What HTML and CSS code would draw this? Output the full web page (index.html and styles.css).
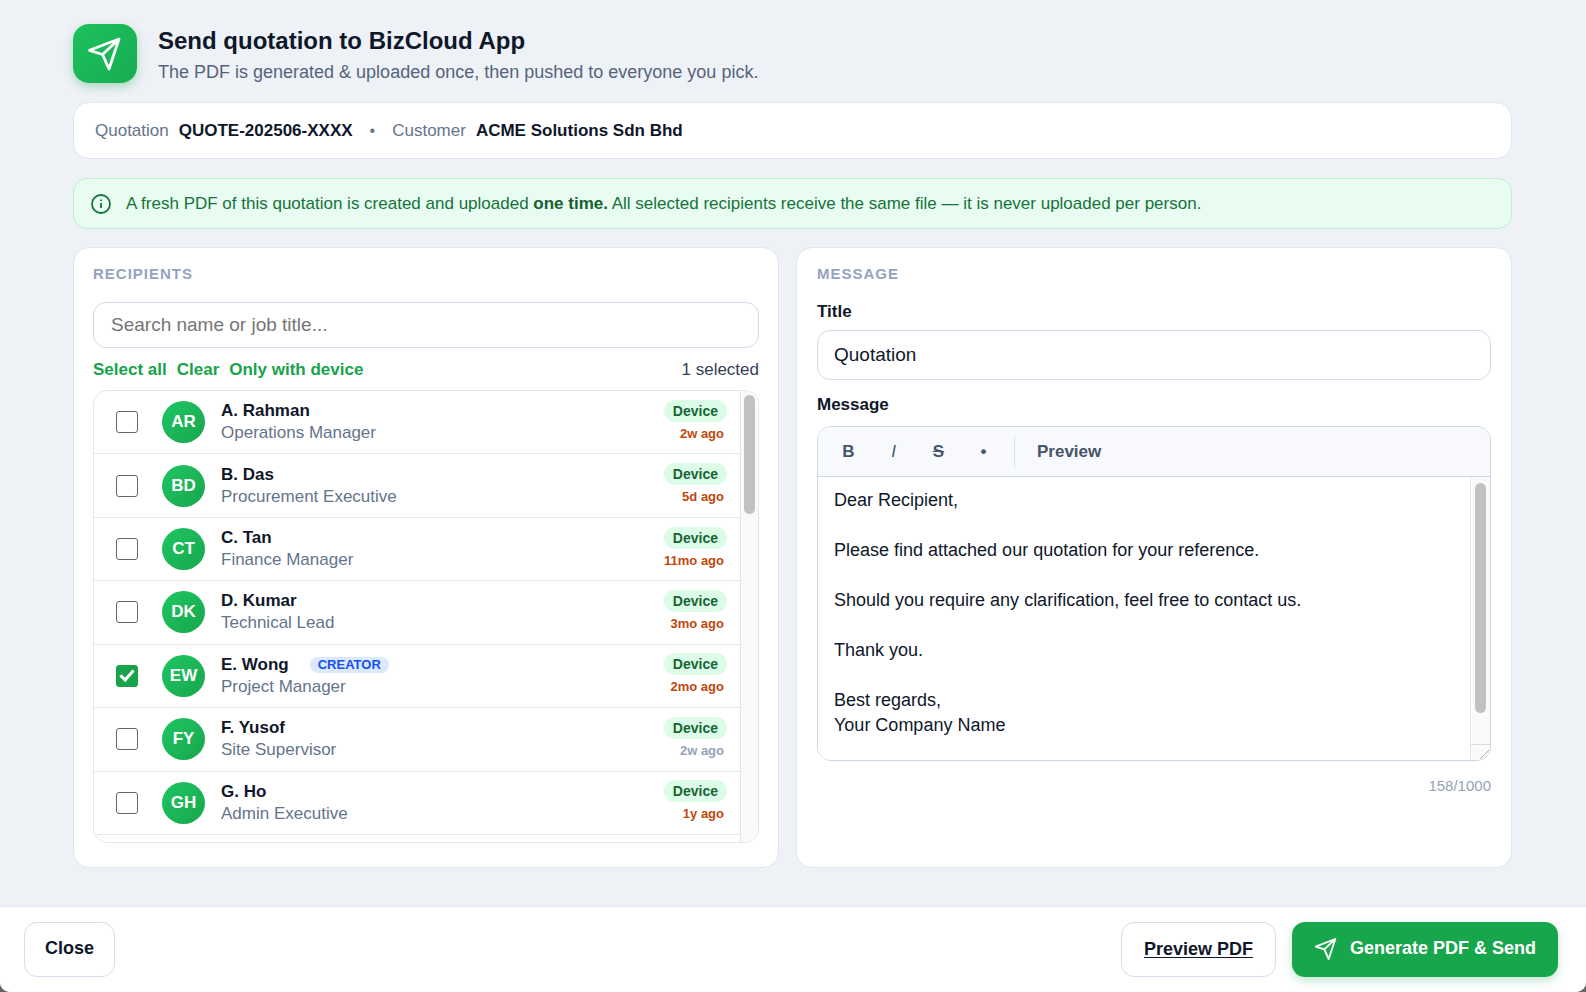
FILE: index.html
```html
<!DOCTYPE html>
<html lang="en">
<head>
    <meta charset="UTF-8">
    <meta name="viewport" content="width=device-width, initial-scale=1.0">
    <title>Send quotation to BizCloud App</title>
    <link rel="stylesheet" href="styles.css">
</head>
<body>

<div class="dialog">
    <main class="content">

        <header class="header">
            <div class="logo">
                <svg class="plane" width="36" height="36" viewBox="0 0 36 36" aria-hidden="true"><path d="M32 3 2.500 14.300 15.500 18.500 22 33ZM32 3 15.500 18.500"/></svg>
            </div>
            <div>
                <h1>Send quotation to BizCloud App</h1>
                <p>The PDF is generated &amp; uploaded once, then pushed to everyone you pick.</p>
            </div>
        </header>

        <div class="meta">
            <span>Quotation</span>
            <strong>QUOTE-202506-XXXX</strong>
            <span class="dot">•</span>
            <span>Customer</span>
            <strong>ACME Solutions Sdn Bhd</strong>
        </div>

        <div class="notice">
            <svg width="20" height="20" viewBox="0 0 20 20" aria-hidden="true"><circle cx="10" cy="10" r="9"/><path d="M10 9v5M10 5.500v1.500"/></svg>
            <p>A fresh PDF of this quotation is created and uploaded <strong>one time.</strong> All selected recipients receive the same file — it is never uploaded per person.</p>
        </div>

        <div class="panels">
            <!-- Recipients -->
            <section class="panel">
                <h2>Recipients</h2>
                <input type="search" class="search" id="search" placeholder="Search name or job title..." aria-label="Search name or job title">
                <div class="actions">
                    <button type="button" id="selectAll">Select all</button>
                    <button type="button" id="clear">Clear</button>
                    <button type="button" id="onlyDevice">Only with device</button>
                    <span id="count">1 selected</span>
                </div>
                <div class="list">
                    <div class="rows">
                        <label class="row">
                            <input type="checkbox">
                            <span class="avatar">AR</span>
                            <span class="who"><b>A. Rahman</b><small>Operations Manager</small></span>
                            <span class="status"><span class="device">Device</span><span class="seen">2w ago</span></span>
                        </label>
                        <label class="row">
                            <input type="checkbox">
                            <span class="avatar">BD</span>
                            <span class="who"><b>B. Das</b><small>Procurement Executive</small></span>
                            <span class="status"><span class="device">Device</span><span class="seen">5d ago</span></span>
                        </label>
                        <label class="row">
                            <input type="checkbox">
                            <span class="avatar">CT</span>
                            <span class="who"><b>C. Tan</b><small>Finance Manager</small></span>
                            <span class="status"><span class="device">Device</span><span class="seen">11mo ago</span></span>
                        </label>
                        <label class="row">
                            <input type="checkbox">
                            <span class="avatar">DK</span>
                            <span class="who"><b>D. Kumar</b><small>Technical Lead</small></span>
                            <span class="status"><span class="device">Device</span><span class="seen">3mo ago</span></span>
                        </label>
                        <label class="row">
                            <input type="checkbox" checked>
                            <span class="avatar">EW</span>
                            <span class="who"><b>E. Wong <span class="creator">CREATOR</span></b><small>Project Manager</small></span>
                            <span class="status"><span class="device">Device</span><span class="seen">2mo ago</span></span>
                        </label>
                        <label class="row">
                            <input type="checkbox">
                            <span class="avatar">FY</span>
                            <span class="who"><b>F. Yusof</b><small>Site Supervisor</small></span>
                            <span class="status"><span class="device">Device</span><span class="seen muted">2w ago</span></span>
                        </label>
                        <label class="row">
                            <input type="checkbox">
                            <span class="avatar">GH</span>
                            <span class="who"><b>G. Ho</b><small>Admin Executive</small></span>
                            <span class="status"><span class="device">Device</span><span class="seen">1y ago</span></span>
                        </label>
                    </div>
                    <div class="track"><div class="thumb"></div></div>
                </div>
            </section>

            <!-- Message -->
            <section class="panel">
                <h2>Message</h2>
                <label class="field-label" for="title">Title</label>
                <input type="text" class="title-input" id="title" value="Quotation">
                <label class="field-label" for="message">Message</label>
                <div class="editor">
                    <div class="toolbar">
                        <button type="button" aria-label="Bold">B</button>
                        <button type="button" class="italic" aria-label="Italic">I</button>
                        <button type="button" class="strike" aria-label="Strikethrough">S</button>
                        <button type="button" aria-label="Bullet list">•</button>
                        <span class="divider"></span>
                        <button type="button" class="preview">Preview</button>
                    </div>
                    <div class="editor-body">
                        <textarea id="message" maxlength="1000">Dear Recipient,

Please find attached our quotation for your reference.

Should you require any clarification, feel free to contact us.

Thank you.

Best regards,
Your Company Name</textarea>
                        <div class="track">
                            <div class="thumb"></div>
                            <svg class="grip" width="19" height="16" viewBox="0 0 19 16" aria-hidden="true"><path d="M9 15 19 5M14 15 19 10"/></svg>
                        </div>
                    </div>
                </div>
                <div class="counter">158/1000</div>
            </section>
        </div>
    </main>

    <footer class="footer">
        <button type="button" class="btn">Close</button>
        <a href="#preview" class="btn preview-pdf">Preview PDF</a>
        <button type="button" class="btn primary">
            <svg class="plane" width="24" height="24" viewBox="0 0 36 36" aria-hidden="true"><path d="M32 3 2.500 14.300 15.500 18.500 22 33ZM32 3 15.500 18.500"/></svg>
            Generate PDF &amp; Send
        </button>
    </footer>
</div>

</body>
</html>
```
FILE: styles.css
```css
*, *::after { box-sizing: border-box; }
body { margin: 0; background: #666; color: #0f172a; font-family: "Liberation Sans", Arial, Helvetica, sans-serif; font-size: 17px; line-height: 22px; }
h1, h2, p { margin: 0; }
button, input, textarea { font-family: inherit; color: inherit; }
button { cursor: pointer; }

.dialog { min-height: 100vh; display: flex; flex-direction: column; background: #eef1f6; border-radius: 0 0 10px 10px; overflow: hidden; }
.content { flex: 1; display: flex; flex-direction: column; padding: 24px 74px 38px 73px; }

/* Header */
.header { display: flex; align-items: flex-start; gap: 21px; height: 59px; margin-bottom: 19px; }
.logo { width: 64px; height: 59px; display: flex; align-items: center; justify-content: center; border-radius: 16px; background: linear-gradient(135deg, #1cc25d, #18ac51); box-shadow: 0 4px 10px rgba(22, 163, 74, 0.3); }
.plane { fill: none; stroke: #fff; stroke-width: 2.8; stroke-linejoin: round; stroke-linecap: round; flex: none; }
.header h1 { font-size: 24px; line-height: 34px; }
.header p { font-size: 18px; line-height: 29px; color: #55647c; }

/* Quotation and customer */
.meta { display: flex; align-items: center; gap: 10px; height: 57px; padding: 0 21px; margin-bottom: 19px; background: #fff; border: 1px solid #e0e6f0; border-radius: 16px; color: #64748b; }
.meta strong { color: #0f172a; }
.meta .dot { margin: 0 7px; font-size: 16px; }

.notice { display: flex; align-items: center; gap: 15px; height: 51px; padding: 0 17px; margin-bottom: 18px; background: #e9fcf1; border: 1px solid #bbf0d0; border-radius: 14px; color: #15733a; }
.notice svg { fill: none; stroke: #15733a; stroke-width: 1.8; flex: none; }
.notice strong { color: #14602f; }

/* Panels */
.panels { flex: 1; display: grid; grid-template-columns: 706fr 716fr; gap: 17px; }
.panel { display: flex; flex-direction: column; min-width: 0; padding: 15px 19px 24px; background: #fff; border: 1px solid #e0e6f0; border-radius: 16px; }
.panel + .panel { padding-left: 20px; padding-right: 20px; }
.panel h2 { font-size: 15px; line-height: 22px; letter-spacing: 1px; text-transform: uppercase; color: #94a3bf; }

.search, .title-input { width: 100%; border: 1px solid #d3dcea; border-radius: 13px; background: #fff; font-size: 19px; outline: none; }
.search { height: 46px; margin-top: 17px; padding: 0 17px; appearance: none; }
.search::placeholder { color: #757575; }
.title-input { height: 50px; padding: 0 16px; }

.actions { display: flex; align-items: center; gap: 10px; margin: 11px 0 9px; }
.actions button { padding: 0; border: 0; background: none; font-size: 17px; line-height: 22px; font-weight: bold; color: #16a34a; }
.actions span { margin-left: auto; color: #334155; }

.list { flex: 1; display: flex; border: 1px solid #e0e6f0; border-radius: 14px; overflow: hidden; }
.rows { flex: 1; display: flex; flex-direction: column; padding-bottom: 7px; }
.row { flex: 1; display: flex; align-items: center; padding: 0 13px 0 22px; border-bottom: 1px solid #e2e8f0; cursor: pointer; }
.row input { appearance: none; width: 22px; height: 22px; margin: 0 24px 0 0; display: flex; justify-content: center; border: 1px solid #666; border-radius: 3px; background: #fff; }
.row input:checked { background: #16a34a; border-color: #16a34a; }
.row input:checked::after { content: ""; width: 8px; height: 14px; margin-top: 1px; border: solid #fff; border-width: 0 3px 3px 0; transform: rotate(42deg); }
.avatar { width: 43px; height: 42px; margin-right: 16px; border-radius: 50%; background: linear-gradient(135deg, #1fc662, #17a64d); color: #fff; font-weight: bold; line-height: 42px; text-align: center; }
.who { flex: 1; display: flex; flex-direction: column; }
.who b { display: flex; align-items: center; }
.who small { font-size: 17px; color: #64748b; }
.creator { margin-left: 21px; padding: 0 8px; border-radius: 8px; background: #dbe8fe; color: #1550f0; font-size: 13px; line-height: 16px; }
.status { display: flex; flex-direction: column; align-items: flex-end; gap: 1px; font-weight: bold; }
.device { padding: 0 9px; border-radius: 11px; background: #dcfce8; color: #166534; font-size: 14px; line-height: 22px; }
.seen { margin-right: 3px; font-size: 13px; line-height: 22px; color: #c2470c; }
.seen.muted { color: #94a3b8; }

.track { width: 18px; padding: 4px 3px; background: #fafafa; border-left: 1px solid #e4e6ea; }
.thumb { width: 11px; height: 119px; border-radius: 6px; background: #c1c1c1; }

/* Message editor */
.field-label { font-weight: bold; margin: 16px 0 7px; }
.title-input + .field-label { margin-top: 14px; margin-bottom: 10px; }
.editor { border: 1px solid #cbd7e6; border-radius: 14px; overflow: hidden; }
.toolbar { display: flex; align-items: center; height: 50px; padding-left: 8px; background: #f7f9fc; border-bottom: 1px solid #cbd7e6; }
.toolbar button { width: 45px; height: 30px; padding: 0; border: 0; background: none; color: #475569; font-size: 17px; font-weight: bold; }
.toolbar .italic { font-style: italic; font-weight: normal; }
.toolbar .strike { text-decoration: line-through; }
.toolbar .divider { width: 1px; height: 30px; margin: 0 12px 0 8px; background: #d8e0ea; }
.toolbar .preview { width: auto; padding: 0 10px; }
.editor-body { display: flex; height: 283px; }
.editor-body textarea { flex: 1; min-width: 0; padding: 11px 16px; border: 0; outline: none; resize: none; overflow: hidden; background: #fff; font-size: 18px; line-height: 25px; }
.editor-body .track { width: 20px; padding: 6px 0 0; display: flex; flex-direction: column; justify-content: space-between; }
.editor-body .thumb { height: 230px; margin-left: 4px; }
.grip { display: block; fill: none; stroke: #a9a9a9; stroke-width: 1; border-top: 1px solid #dcdcdc; }
.counter { margin-top: 14px; font-size: 15px; text-align: right; color: #94a3b8; }

/* Footer */
.footer { display: flex; align-items: center; gap: 16px; height: 86px; padding: 0 28px 0 24px; background: #fff; border-top: 1px solid #e2e8f0; }
.btn { display: flex; align-items: center; justify-content: center; gap: 12px; height: 55px; padding: 0 20px 2px; border: 1px solid #d6deeb; border-radius: 13px; background: #fff; color: #0f172a; font-size: 18px; font-weight: bold; }
.preview-pdf { margin-left: auto; padding: 0 22px 2px; text-decoration: underline; text-underline-offset: 2px; }
.btn.primary { padding: 0 22px 2px; border: 0; background: #18a64c; color: #fff; box-shadow: 0 4px 10px rgba(22, 163, 74, 0.25); }
```
